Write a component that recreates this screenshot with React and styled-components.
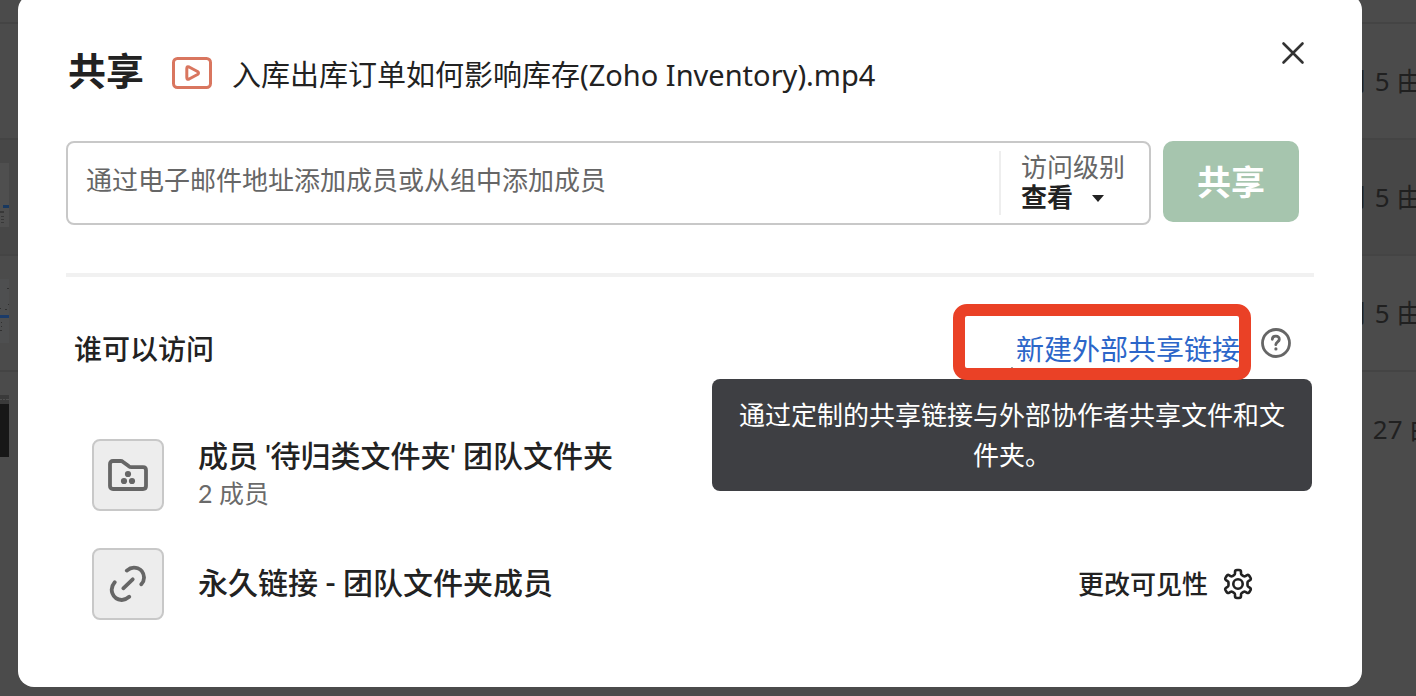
import React from 'react';
import styled, { createGlobalStyle } from 'styled-components';

const GlobalStyle = createGlobalStyle`
  * {
    box-sizing: border-box;
  }
  body {
    margin: 0;
    background: #4b4b4b;
    color: #222;
    font-family: Lato, "Noto Sans CJK SC", sans-serif;
    overflow: hidden;
  }
  button, input, select {
    font-family: inherit;
  }
`;

const Page = styled.div`
  min-height: 100vh;
  padding-top: 22px;
`;

const FileRow = styled.div`
  display: flex;
  align-items: center;
  justify-content: space-between;
  height: 116px;
  padding-bottom: 1px;
  border-top: 2px solid #444;
  background: ${(props) => (props.$active ? '#474747' : '#4b4b4b')};
`;

const Modified = styled.span`
  width: ${(props) => (props.$wide ? '76px' : '74px')};
  color: #202020;
  font-family: "Noto Sans", "Noto Sans CJK SC", sans-serif;
  font-size: 26px;
  line-height: 40px;
  white-space: nowrap;
`;

const Overlay = styled.div`
  position: fixed;
  inset: 0;
  padding: 0 54px 0 18px;
`;

const Dialog = styled.section`
  margin-top: -6px;
  padding: 36px 48px 67px;
  border-radius: 16px;
  background: #fff;
`;

const Header = styled.header`
  display: flex;
  align-items: center;
  height: 86px;
  margin-bottom: 25px;
`;

const Heading = styled.h1`
  margin: 0 28px 0 2px;
  padding-bottom: 6px;
  font-size: 38px;
  line-height: 44px;
  font-weight: 700;
`;

const FileName = styled.span`
  flex: 1;
  margin-left: 20px;
  padding-top: 4px;
  font-family: "Noto Sans", "Noto Sans CJK SC", sans-serif;
  font-size: 29px;
  line-height: 40px;
`;

const IconButton = styled.button`
  display: flex;
  align-items: center;
  justify-content: center;
  padding: 0;
  border: 0;
  background: none;
  cursor: pointer;
`;

const CloseButton = styled(IconButton)`
  align-self: flex-start;
  width: 42px;
  height: 46px;
`;

const InviteForm = styled.form`
  display: flex;
  gap: 12px;
  padding-right: 15px;
`;

const Field = styled.div`
  display: flex;
  align-items: center;
  flex: 1;
  height: 84px;
  border: 2px solid #c8c8c8;
  border-radius: 8px;
`;

const EmailInput = styled.input`
  flex: 1;
  min-width: 0;
  height: 60px;
  padding: 0 18px 6px;
  border: 0;
  outline: 0;
  background: none;
  font-size: 26px;
  &::placeholder {
    color: #666;
    opacity: 1;
  }
`;

const Access = styled.div`
  position: relative;
  width: 150px;
  height: 64px;
  padding-left: 20px;
  border-left: 2px solid #eee;
`;

const AccessLabel = styled.label`
  display: block;
  color: #666;
  font-size: 26px;
  line-height: 32px;
`;

const AccessSelect = styled.select`
  display: block;
  width: 100px;
  height: 28px;
  padding: 0;
  border: 0;
  outline: 0;
  appearance: none;
  background: none;
  color: #222;
  font-size: 26px;
  line-height: 28px;
  font-weight: 700;
`;

const Caret = styled.span`
  position: absolute;
  right: 45px;
  bottom: 13px;
  border: 6px solid transparent;
  border-top: 7px solid #222;
  border-bottom: 0;
  pointer-events: none;
`;

const ShareButton = styled.button`
  width: 136px;
  height: 81px;
  padding: 0 0 2px;
  border: 0;
  border-radius: 10px;
  background: #a6c5ae;
  color: #fff;
  font-size: 34px;
  font-weight: 700;
`;

const Divider = styled.hr`
  height: 4px;
  margin: 48px 0 44px;
  border: 0;
  background: #f1f1f1;
`;

const AccessHeader = styled.div`
  position: relative;
  display: flex;
  align-items: center;
  height: 58px;
  padding: 0 23px 0 8px;
`;

const SubHeading = styled.h2`
  flex: 1;
  margin: 0;
  padding-bottom: 2px;
  font-size: 28px;
  line-height: 40px;
  font-weight: 500;
`;

const LinkWrap = styled.span`
  position: relative;
  z-index: 1;
  display: flex;
  margin-right: 21px;
`;

const NewLink = styled.a`
  padding-bottom: 2px;
  color: #2c66c9;
  font-size: 28px;
  line-height: 40px;
  text-decoration: none;
`;

const Highlight = styled.span`
  position: absolute;
  inset: -25px -11px -9px -63px;
  border: 12px solid #ea4126;
  border-radius: 14px;
  pointer-events: none;
`;

const HelpButton = styled(IconButton)`
  align-self: flex-start;
  margin-top: 7px;
`;

const Tooltip = styled.div`
  position: absolute;
  top: 58px;
  right: 2px;
  width: 600px;
  padding: 16px 24px;
  border-radius: 8px;
  background: #3e3f43;
  color: #fff;
  font-size: 26px;
  line-height: 40px;
  text-align: center;
  &::before {
    content: '';
    position: absolute;
    top: -12px;
    left: 50%;
    margin-left: -12px;
    border: 12px solid transparent;
    border-top: 0;
    border-bottom-color: #3e3f43;
  }
`;

const MemberList = styled.ul`
  display: flex;
  flex-direction: column;
  gap: 37px;
  margin: 60px 0 0;
  padding: 0 61px 0 26px;
  list-style: none;
`;

const Member = styled.li`
  display: flex;
  align-items: center;
  gap: 34px;
`;

const MemberIcon = styled.span`
  display: flex;
  align-items: center;
  justify-content: center;
  width: 72px;
  height: 72px;
  border: 2px solid #c8c8c8;
  border-radius: 8px;
  background: #ededed;
`;

const MemberText = styled.div`
  flex: 1;
`;

const MemberName = styled.div`
  font-family: Roboto, "Noto Sans CJK SC", sans-serif;
  font-size: 30px;
  line-height: 36px;
  font-weight: 500;
`;

const MemberCount = styled.div`
  color: #6a6a6a;
  font-size: 25px;
  line-height: 36px;
`;

const VisibilityButton = styled(IconButton)`
  gap: 15px;
  color: #222;
  font-size: 26px;
  line-height: 36px;
  font-weight: 500;
`;

const PaleThumb = () => (
  <svg width="10" height="64" viewBox="0 0 10 64">
    <path d="M0 0h9v64H0z" fill="#4f4f4f" />
    <path d="M3 42h6v3H3z" fill="#18385f" />
    <path d="M0 48h4v2H0zM1 53h3v1H1zM1 56h3v1H1zM1 59h3v1H1z" fill="#383838" />
  </svg>
);

const DocThumb = () => (
  <svg width="10" height="64" viewBox="0 0 10 64">
    <path d="M0 0h9v64H0z" fill="#4e4f50" />
    <path d="M0 36h9v3H0z" fill="#1b3b69" />
    <path d="M7 9h2v1H7zM8 25h1v1H8zM5 30h2v1H5zM0 29h1v1H0zM1 43h1v1H1zM1 47h1v1H1zM0 51h2v1H0z" fill="#303030" />
  </svg>
);

const DarkThumb = () => (
  <svg width="10" height="64" viewBox="0 0 10 64">
    <path d="M0 0h9v9H0z" fill="#3a3a3a" />
    <path d="M0 4h2v1H0zM3 4h2v1H3zM6 4h3v1H6z" fill="#505050" />
    <path d="M0 9h9v53H0z" fill="#171717" />
  </svg>
);

const VideoIcon = () => (
  <svg width="40" height="32" viewBox="0 0 40 32" fill="none" stroke="#d9765f" strokeWidth="3" strokeLinejoin="round">
    <rect x="1.5" y="1.5" width="37" height="29" rx="4" />
    <path d="M14.800 11.500V20.500q0 2.500 2.300 1.500L25.500 17.500q2-1.500 0-3L17.100 10q-2.300-1-2.300 1.500z" />
  </svg>
);

const CloseIcon = () => (
  <svg width="24" height="24" viewBox="0 0 24 24" stroke="#333" strokeWidth="2.600" strokeLinecap="round">
    <path d="M2.500 2.500l19 19M21.500 2.500l-19 19" />
  </svg>
);

const HelpIcon = () => (
  <svg width="30" height="30" viewBox="0 0 30 30" fill="none" stroke="#666" strokeLinecap="round" strokeLinejoin="round">
    <circle cx="15" cy="15" r="13.500" strokeWidth="2.800" />
    <path d="M11.300 11.300c.2-4.400 7.400-4 7 .2-.2 2.300-3.500 2.500-3.500 5.200" strokeWidth="2.800" />
    <circle cx="14.900" cy="20.900" r="1.600" fill="#666" stroke="none" />
  </svg>
);

const TeamFolderIcon = () => (
  <svg width="40" height="32" viewBox="0 0 40 32" fill="none" stroke="#666" strokeWidth="3.800" strokeLinejoin="round">
    <path d="M2 5q0-3 3-3h7.500q1.500 0 2.600.9l5.500 4.200q1.200 1.100 3 1.100H35q3 0 3 3v15.800q0 3-3 3H5q-3 0-3-3z" />
    <g fill="#666" stroke="none">
      <circle cx="20" cy="15" r="3.100" />
      <circle cx="16" cy="22" r="3.100" />
      <circle cx="24" cy="22" r="3.100" />
    </g>
  </svg>
);

const LinkIcon = () => (
  <svg width="38" height="38" viewBox="0 0 38 38" fill="none" stroke="#666" strokeWidth="3.800" strokeLinecap="round">
    <path d="M17.800 5.600C24.500-.3 34.500 3.200 35 12.300c.1 2.700-.8 4.900-2.700 7" />
    <path d="M5.700 17.200C-.2 24 3.200 34.500 12.700 35c2.700.1 4.900-1 7.500-3.200" />
    <path d="M14.300 23.300l9.400-9" />
  </svg>
);

const GearIcon = () => (
  <svg width="30" height="32" viewBox="0 0 30 32" fill="none" stroke="#222" strokeWidth="2.600" strokeLinejoin="round">
    <path d="M12 4q0-2 2-2h2q2 0 2 2v1.500q0 1 1 1.700l1.500.9q1 .5 1.900 0l1.300-.8q1.700-1 2.700.7l1 1.700q1 1.700-.7 2.700l-1.300.8q-.9.500-.9 1.600v2.400q0 1.100.9 1.600l1.300.8q1.700 1 .7 2.700l-1 1.700q-1 1.700-2.700.7l-1.300-.8q-.9-.5-1.900 0l-1.500.9q-1 .7-1 1.700V28q0 2-2 2h-2q-2 0-2-2v-1.500q0-1-1-1.700l-1.500-.9q-1-.5-1.900 0l-1.300.8q-1.700 1-2.700-.7l-1-1.700q-1-1.700.7-2.700l1.300-.8q.9-.5.9-1.600v-2.400q0-1.100-.9-1.600l-1.300-.8q-1.700-1-.7-2.700l1-1.700q1-1.700 2.700-.7l1.300.8q.9.500 1.900 0l1.500-.9q1-.7 1-1.700z" />
    <circle cx="15" cy="16" r="4.700" />
  </svg>
);

const files = [
  { thumb: null, date: '月 5 由' },
  { thumb: <PaleThumb />, date: '月 5 由', active: true },
  { thumb: <DocThumb />, date: '月 5 由' },
  { thumb: <DarkThumb />, date: '月 27 由', wide: true },
];

function App() {
  return (
    <>
      <GlobalStyle />
      <Page>
        {files.map((file, index) => (
          <FileRow key={index} $active={file.active}>
            <span>{file.thumb}</span>
            <Modified $wide={file.wide}>{file.date}</Modified>
          </FileRow>
        ))}
      </Page>
      <Overlay>
        <Dialog role="dialog" aria-labelledby="share-title">
          <Header>
            <Heading id="share-title">共享</Heading>
            <VideoIcon />
            <FileName>入库出库订单如何影响库存(Zoho Inventory).mp4</FileName>
            <CloseButton type="button" aria-label="关闭">
              <CloseIcon />
            </CloseButton>
          </Header>
          <InviteForm>
            <Field>
              <EmailInput aria-label="添加成员" placeholder="通过电子邮件地址添加成员或从组中添加成员" />
              <Access>
                <AccessLabel htmlFor="access">访问级别</AccessLabel>
                <AccessSelect id="access" defaultValue="view">
                  <option value="view">查看</option>
                </AccessSelect>
                <Caret />
              </Access>
            </Field>
            <ShareButton type="button">共享</ShareButton>
          </InviteForm>
          <Divider />
          <AccessHeader>
            <SubHeading>谁可以访问</SubHeading>
            <LinkWrap>
              <NewLink href="#new-link">新建外部共享链接</NewLink>
              <Highlight />
            </LinkWrap>
            <HelpButton type="button" aria-label="帮助">
              <HelpIcon />
            </HelpButton>
            <Tooltip role="tooltip">通过定制的共享链接与外部协作者共享文件和文件夹。</Tooltip>
          </AccessHeader>
          <MemberList>
            <Member>
              <MemberIcon>
                <TeamFolderIcon />
              </MemberIcon>
              <MemberText>
                <MemberName>成员 '待归类文件夹' 团队文件夹</MemberName>
                <MemberCount>2 成员</MemberCount>
              </MemberText>
            </Member>
            <Member>
              <MemberIcon>
                <LinkIcon />
              </MemberIcon>
              <MemberText>
                <MemberName>永久链接 - 团队文件夹成员</MemberName>
              </MemberText>
              <VisibilityButton type="button">
                更改可见性
                <GearIcon />
              </VisibilityButton>
            </Member>
          </MemberList>
        </Dialog>
      </Overlay>
    </>
  );
}

export default App;
